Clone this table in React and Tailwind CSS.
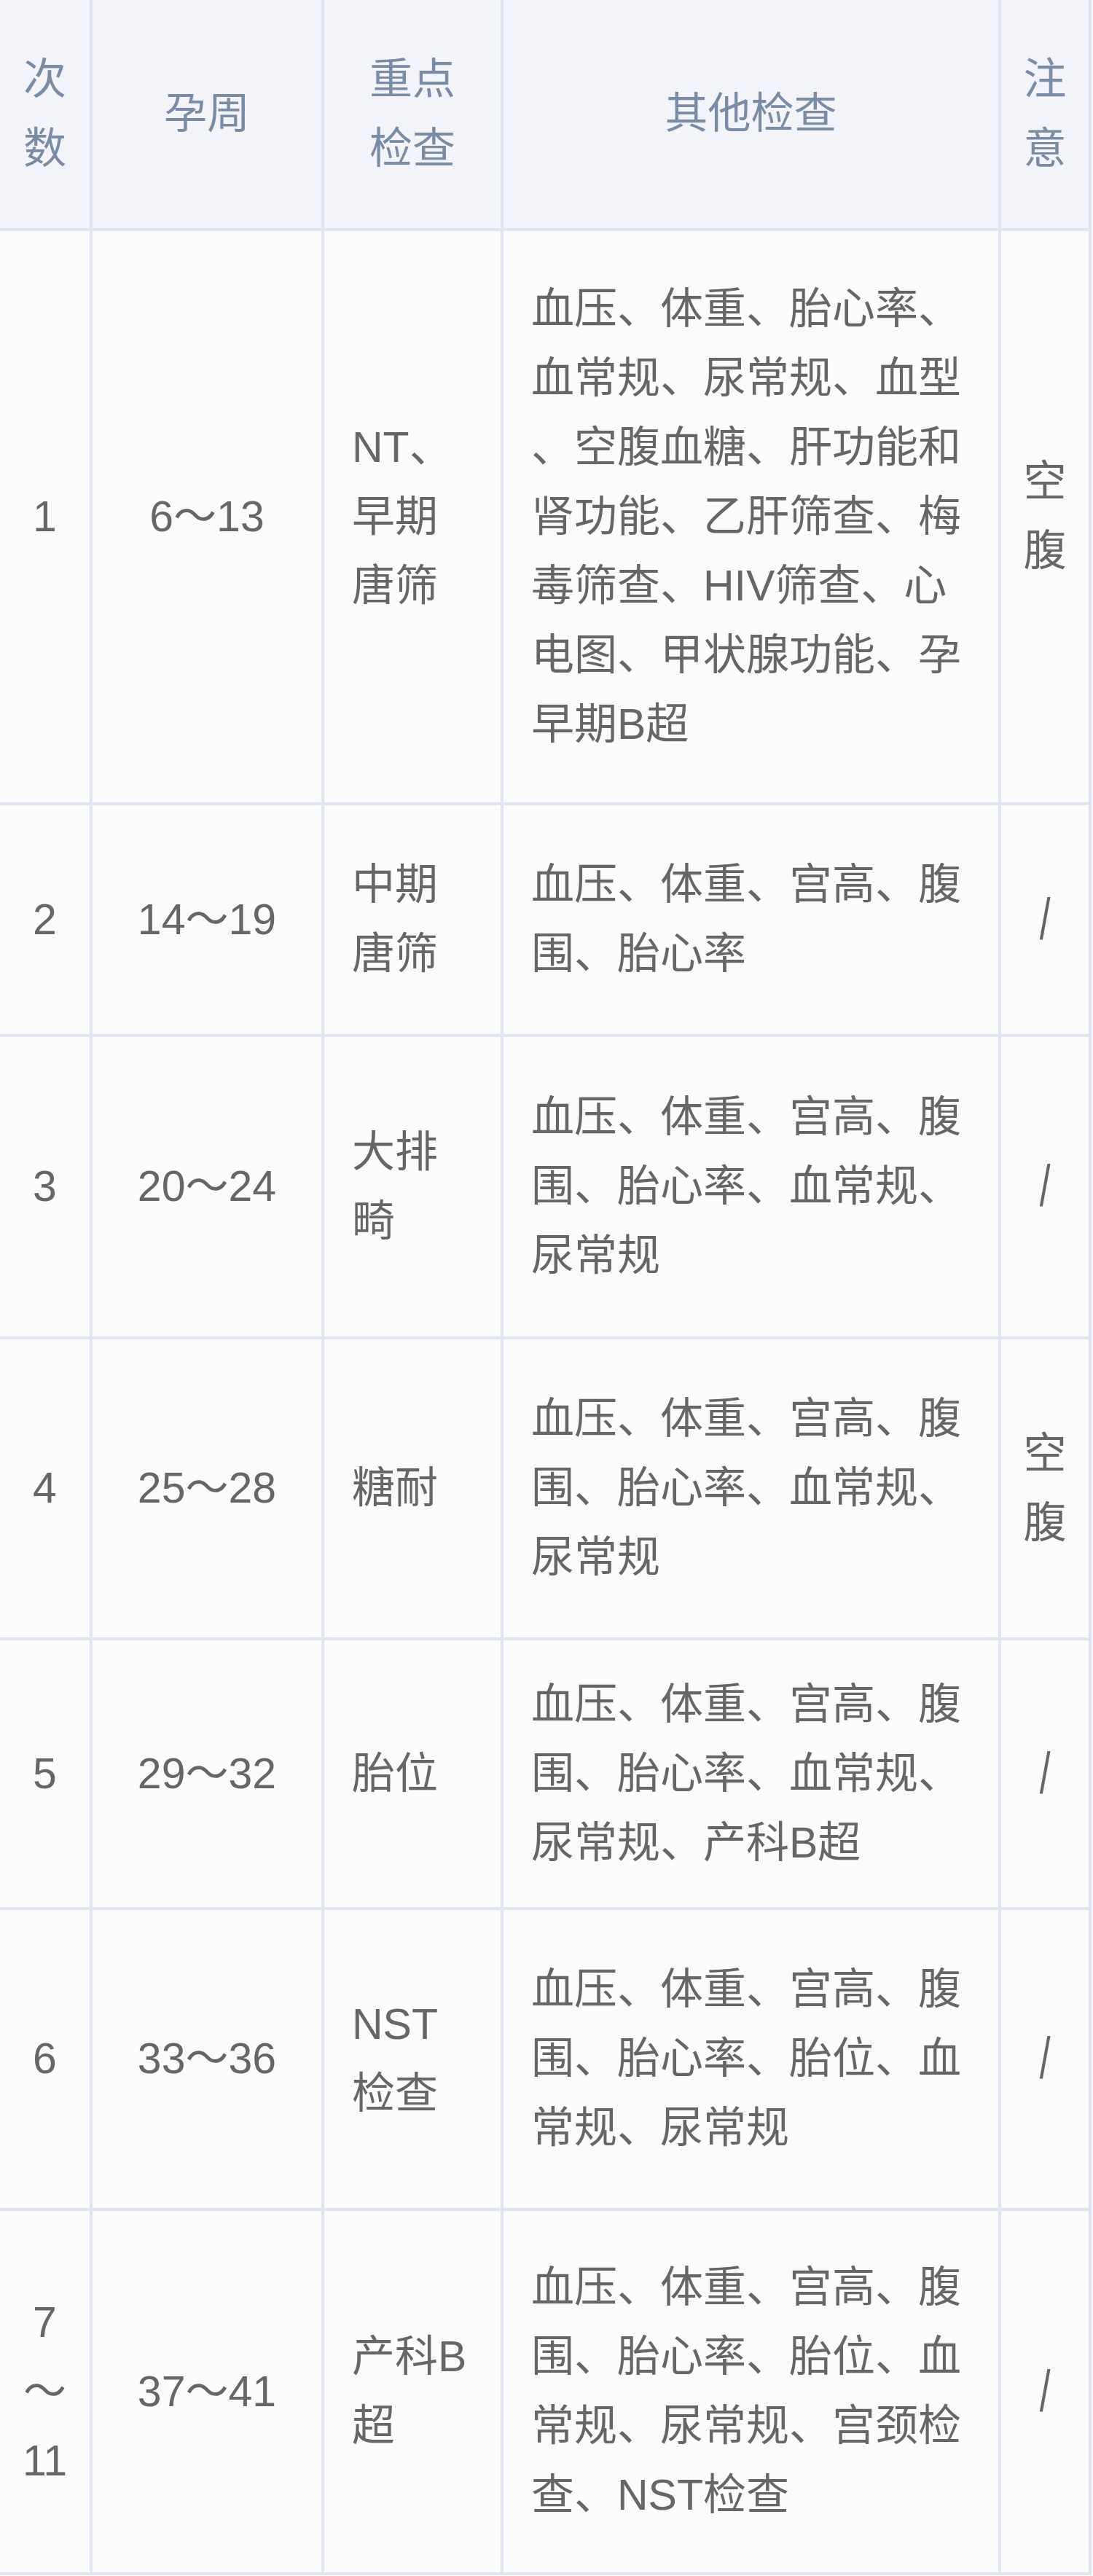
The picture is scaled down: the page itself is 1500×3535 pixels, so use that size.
import React from 'react';

// 孕检时间表
const rows = [
  {
    n: ['1'],
    week: '6～13',
    key: ['NT、', '早期', '唐筛'],
    other: [
      '血压、体重、胎心率、',
      '血常规、尿常规、血型',
      '、空腹血糖、肝功能和',
      '肾功能、乙肝筛查、梅',
      '毒筛查、HIV筛查、心',
      '电图、甲状腺功能、孕',
      '早期B超',
    ],
    note: ['空', '腹'],
  },
  {
    n: ['2'],
    week: '14～19',
    key: ['中期', '唐筛'],
    other: ['血压、体重、宫高、腹', '围、胎心率'],
    note: null,
  },
  {
    n: ['3'],
    week: '20～24',
    key: ['大排', '畸'],
    other: ['血压、体重、宫高、腹', '围、胎心率、血常规、', '尿常规'],
    note: null,
  },
  {
    n: ['4'],
    week: '25～28',
    key: ['糖耐'],
    other: ['血压、体重、宫高、腹', '围、胎心率、血常规、', '尿常规'],
    note: ['空', '腹'],
  },
  {
    n: ['5'],
    week: '29～32',
    key: ['胎位'],
    other: ['血压、体重、宫高、腹', '围、胎心率、血常规、', '尿常规、产科B超'],
    note: null,
  },
  {
    n: ['6'],
    week: '33～36',
    key: ['NST', '检查'],
    other: ['血压、体重、宫高、腹', '围、胎心率、胎位、血', '常规、尿常规'],
    note: null,
  },
  {
    n: ['7', '～', '11'],
    week: '37～41',
    key: ['产科B', '超'],
    other: ['血压、体重、宫高、腹', '围、胎心率、胎位、血', '常规、尿常规、宫颈检', '查、NST检查'],
    note: null,
  },
];

const Lines = ({ items }) => (
  <div>
    {items.map((t, i) => (
      <div key={i} className="whitespace-nowrap">{t}</div>
    ))}
  </div>
);

const Head = ({ children }) => (
  <div className="flex items-center justify-center bg-[#f2f4f9] text-center text-[#7a8ba4]">
    {children}
  </div>
);

const Center = ({ children }) => (
  <div className="flex items-center justify-center bg-[#fcfbfb] text-center">{children}</div>
);

const Left = ({ children }) => (
  <div className="flex items-center justify-start bg-[#fcfbfb] pl-[38px]">{children}</div>
);

export default function App() {
  return (
    <div
      className="w-[1500px] bg-[#fcfbfb] text-[59px] leading-[95px] text-[#666666]"
      style={{ fontFamily: '"Liberation Sans", "Noto Sans CJK SC", sans-serif' }}
    >
      <div className="grid w-[1498px] grid-cols-[123px_314px_242px_679px_120px] grid-rows-[313px_784px_314px_411px_409px_366px_409px_496px] gap-[4px] border-r-4 border-b-4 border-[#dfe6f2] bg-[#dfe6f2]">
        <Head>
          <Lines items={['次', '数']} />
        </Head>
        <Head>孕周</Head>
        <Head>
          <Lines items={['重点', '检查']} />
        </Head>
        <Head>其他检查</Head>
        <Head>
          <Lines items={['注', '意']} />
        </Head>

        {rows.map((r, i) => (
          <React.Fragment key={i}>
            <Center>
              <Lines items={r.n} />
            </Center>
            <Center>{r.week}</Center>
            <Left>
              <Lines items={r.key} />
            </Left>
            <Left>
              <Lines items={r.other} />
            </Left>
            <Center>
              {r.note ? (
                <Lines items={r.note} />
              ) : (
                <span className="inline-block scale-x-[0.9] scale-y-[1.35] leading-[95px]">/</span>
              )}
            </Center>
          </React.Fragment>
        ))}
      </div>
    </div>
  );
}
